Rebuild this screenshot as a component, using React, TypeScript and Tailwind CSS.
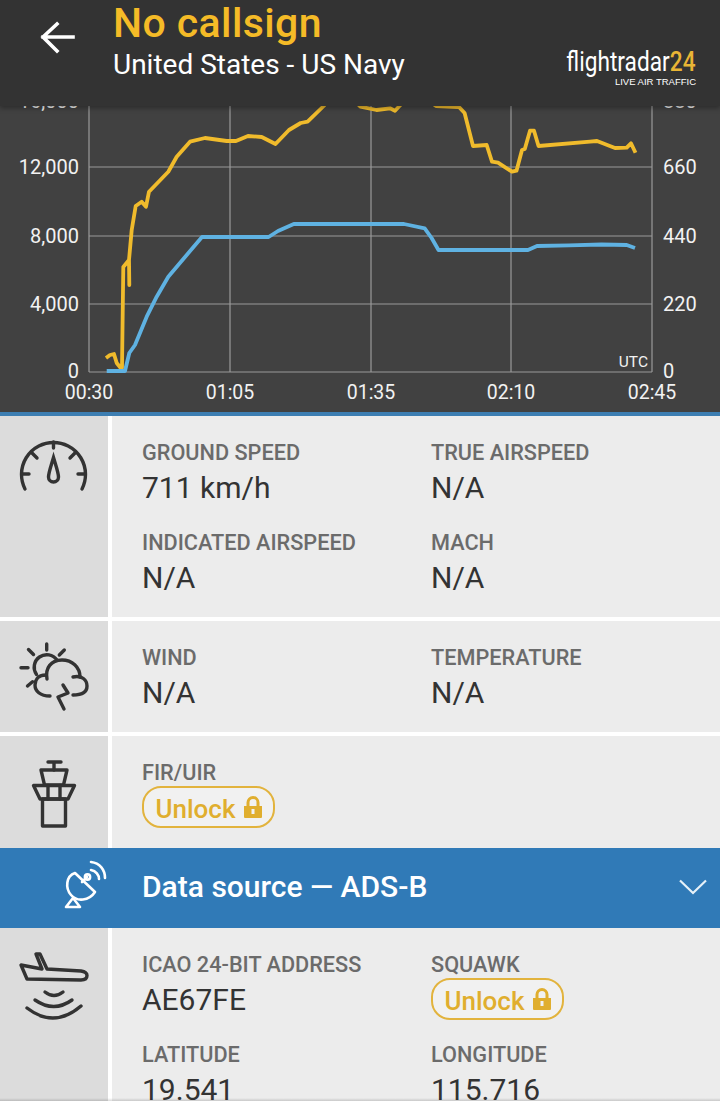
import React from "react";

const altitude =
  "106,358 110,355 114,354 116.7,363 120.7,368 122,368 123.3,267 129,260 129.3,285 129,260 131.7,230 135.7,206 141.7,201.7 146,206.7 149,191.7 168.3,171.7 176.7,156.7 190,141.7 205,138 226.7,141 236,141 248,136 261.7,137 275.5,144 289,130 300.7,123 307.6,121.7 323.7,106 335,92 350,96 360.4,106.7 376.5,110 390,108.3 395,110.7 399.5,106 410,95 425,98 436,106 459,107 464.6,113 473,146 486.7,145 492,161.7 498,162.7 512,171.7 516.5,170.7 522,150 524.8,149 530,130.7 534,130.7 538.5,146 590,141.7 597,141 615,148 626.7,147.7 631,143.3 635.5,152.7";
const speed =
  "106.7,371 125,371 129.3,353 135,345 146.7,316.7 156.7,296.7 168.3,276.7 186.7,255 202,237 268.6,237 278,231 293.8,224 404,224 424.7,228.3 431.6,238 438.5,250 528,250 537,246 569,245.3 601.5,244.5 626.7,245 635,248";

const gridY = [99, 167, 236, 304, 372];
const gridX = [89, 230, 371, 511, 652];
const leftLabels = [
  ["16,000", 108],
  ["12,000", 174],
  ["8,000", 243],
  ["4,000", 311],
  ["0", 378],
] as const;
const rightLabels = [
  ["880", 108],
  ["660", 174],
  ["440", 243],
  ["220", 311],
  ["0", 378],
] as const;
const timeLabels = [
  ["00:30", 89],
  ["01:05", 230],
  ["01:35", 371],
  ["02:10", 511],
  ["02:45", 652],
] as const;

const FlightChart = () => (
  <div className="h-[306px] bg-[#414141]">
    <svg
      width="720"
      height="306"
      viewBox="0 106 720 306"
      className="overflow-visible"
      style={{ fontFamily: "Roboto, sans-serif" }}
    >
      {gridY.map((y) => (
        <line key={y} x1="89" x2="652" y1={y} y2={y} stroke="#9a9a9a" strokeWidth="1.2" />
      ))}
      {gridX.map((x) => (
        <line key={x} x1={x} x2={x} y1="90" y2="372" stroke="#9a9a9a" strokeWidth="1.2" />
      ))}
      <polyline points={altitude} fill="none" stroke="#f0bb2c" strokeWidth="3.8" strokeLinejoin="round" />
      <polyline points={speed} fill="none" stroke="#5fb2e2" strokeWidth="3.8" strokeLinejoin="round" />
      {leftLabels.map(([t, y]) => (
        <text key={t} x="79" y={y} textAnchor="end" fontSize="20" fill="#f2f2f2">
          {t}
        </text>
      ))}
      {rightLabels.map(([t, y]) => (
        <text key={t} x="663" y={y} fontSize="20" fill="#f2f2f2">
          {t}
        </text>
      ))}
      {timeLabels.map(([t, x]) => (
        <text key={t} x={x} y="399" textAnchor="middle" fontSize="19.5" fill="#f2f2f2">
          {t}
        </text>
      ))}
      <text x="648" y="367" textAnchor="end" fontSize="15.5" fill="#f2f2f2">
        UTC
      </text>
    </svg>
  </div>
);

const GaugeIcon = () => (
  <svg width="108" height="100" viewBox="0 0 108 100" fill="none" stroke="#333" strokeWidth="3.4" strokeLinecap="round">
    <path d="M25 73 A32 32 0 1 1 82 73" />
    <path d="M53.5 26v6M22 58h7M78 58h7M32 37l5 5M75 37l-5 5" />
    <path d="M53.5 41.5 C51 50 48.5 57 48.5 61 a5 5 0 0 0 10 0 C58.5 57 56 50 53.5 41.5Z" />
  </svg>
);

const WeatherIcon = () => (
  <svg width="108" height="100" viewBox="0 0 108 100" fill="none" stroke="#333" strokeWidth="3.4" strokeLinecap="round" strokeLinejoin="round">
    <path d="M46.7 23v6M21 46.7h7M28.5 28.5l5 5M64.3 29l-5 5M27.5 65l5-4.3" />
    <path d="M36.5 53.5 A11.5 11.5 0 0 1 57 39" />
    <path d="M47 58 C45 47 51 39 62 39 C72 39 80 46 80 56" />
    <path d="M46 54 C37 54 35 60 35 64 C35 70 40 75 50 75" />
    <path d="M73 56 C82 54 87 59 87 65 C87 71 82 74 73 74" />
    <path d="M63 64 L68 72 L58 76 L64 88" />
  </svg>
);

const TowerIcon = () => (
  <svg width="108" height="100" viewBox="0 0 108 100" fill="none" stroke="#333" strokeWidth="3.4" strokeLinejoin="round" strokeLinecap="round">
    <path d="M48 26h13M54 26v8" />
    <path d="M41 34h26l-3.5 15h-19Z" />
    <path d="M33.5 49.5h41L68 63H40Z" />
    <path d="M48 49.5V63M60 49.5V63" />
    <path d="M42.5 63h23v27h-23Z" />
  </svg>
);

const DishIcon = () => (
  <svg width="108" height="80" viewBox="0 0 108 80" fill="none" stroke="#fff" strokeWidth="2.6" strokeLinecap="round" strokeLinejoin="round">
    <path d="M75 25 C66 28 65 40 71 47 C77 54 89 53 95 44Z" />
    <path d="M82 34 L87 29" />
    <circle cx="87.5" cy="29" r="2.6" />
    <path d="M91 22 C96 23 99 27 99 31" />
    <path d="M91 14 C100 15 105 22 105 30" />
    <path d="M73 50 L66 59 H80Z" />
  </svg>
);

const PlaneIcon = () => (
  <svg width="108" height="110" viewBox="0 0 108 110" fill="none" stroke="#333" strokeWidth="3.4" strokeLinejoin="round" strokeLinecap="round">
    <path d="M21 37 L42 41 L36 26 H40 L47 41 L81 43 Q87 44 87 47.5 Q87 52 81 52 L27 51 Z" />
    <path d="M45 64 Q54 71 63 64" />
    <path d="M35 72 Q54 85 72 72" />
    <path d="M27 80 Q54 101 81 78" />
  </svg>
);

const UnlockPill = () => (
  <div className="flex h-[42px] w-[133px] items-center justify-center gap-[8px] rounded-[19px] border-2 border-[#e2b33d] bg-[#f1f1f1] text-[26px] font-medium text-[#e0ae2e]">
    <span className="mt-1">Unlock</span>
    <svg width="18" height="22" viewBox="0 0 18 22" fill="#e0ae2e">
      <path fillRule="evenodd" d="M0 10h18v11a1 1 0 0 1-1 1H1a1 1 0 0 1-1-1ZM7.5 13v5h3v-5Z" />
      <path d="M2.5 10V6.5a6.5 6.5 0 0 1 13 0V10h-3V6.5a3.5 3.5 0 0 0-7 0V10Z" />
    </svg>
  </div>
);

type FieldProps = { label: string; value?: string; locked?: boolean };

const Field = ({ label, value, locked }: FieldProps) => (
  <div>
    <div className="h-[28px] text-[21.7px] leading-[30px] font-medium whitespace-nowrap text-[#6b6b6b]">{label}</div>
    {locked ? (
      <UnlockPill />
    ) : (
      <div className="h-[44px] text-[30px] leading-[44px] text-[#333]">{value}</div>
    )}
  </div>
);

type RowProps = { icon: React.ReactNode; fields: FieldProps[]; className: string };

const Row = ({ icon, fields, className }: RowProps) => (
  <div className={`flex ${className}`}>
    <div className="w-[108px] shrink-0 bg-[#dcdcdc]">{icon}</div>
    <div className="ml-1 grid flex-1 grid-cols-[289px_1fr] content-start gap-y-[18px] bg-[#ececec] pt-[22px] pl-[30px]">
      {fields.map((f) => (
        <Field key={f.label} {...f} />
      ))}
    </div>
  </div>
);

export default function App() {
  return (
    <div
      className="relative h-[1101px] w-[720px] overflow-hidden bg-white"
      style={{ fontFamily: "Roboto, sans-serif" }}
    >
      <header className="relative z-10 flex h-[106px] bg-[#333333] shadow-[0_2px_5px_rgba(0,0,0,0.35)]">
        <div className="flex w-[113px] shrink-0 justify-start pt-[21px] pl-[40px]">
          <svg width="36" height="34" viewBox="0 0 36 34" fill="none" stroke="#fff" strokeWidth="3.6" strokeLinecap="square">
            <path d="M3 16h30M17 3 3 16l14 14" />
          </svg>
        </div>
        <div className="flex-1">
          <div className="h-[46px] text-[41px] leading-[46px] font-medium tracking-[0.4px] text-[#f5bb27]">No callsign</div>
          <div className="mt-[1px] text-[28px] leading-[36px] text-white">United States - US Navy</div>
        </div>
        <div className="flex w-[170px] flex-col items-end pt-[48px] pr-[24px]">
          <div className="h-[29px] origin-right scale-x-[0.81] text-[28px] leading-[28px] font-normal whitespace-nowrap text-white">
            flightradar<span className="font-medium text-[#e9b535]">24</span>
          </div>
          <div className="text-[9.5px] leading-[10px] whitespace-nowrap text-white" style={{ fontFamily: '"Liberation Sans", sans-serif' }}>
            LIVE AIR TRAFFIC
          </div>
        </div>
      </header>

      <FlightChart />
      <div className="h-1 bg-[#3d7eb2]" />

      <Row
        className="h-[201px]"
        icon={<GaugeIcon />}
        fields={[
          { label: "GROUND SPEED", value: "711 km/h" },
          { label: "TRUE AIRSPEED", value: "N/A" },
          { label: "INDICATED AIRSPEED", value: "N/A" },
          { label: "MACH", value: "N/A" },
        ]}
      />
      <Row
        className="mt-1 h-[111px]"
        icon={<WeatherIcon />}
        fields={[
          { label: "WIND", value: "N/A" },
          { label: "TEMPERATURE", value: "N/A" },
        ]}
      />
      <Row className="mt-1 h-[112px]" icon={<TowerIcon />} fields={[{ label: "FIR/UIR", locked: true }]} />

      <div className="flex h-[80px] items-center bg-[#307ab7] text-white">
        <div className="w-[142px] shrink-0 self-start">
          <DishIcon />
        </div>
        <div className="mb-1 flex-1 text-[30px] font-medium">Data source — ADS-B</div>
        <svg className="mr-[13px] mb-[2px]" width="28" height="16" viewBox="0 0 28 16" fill="none" stroke="#e6f1f8" strokeWidth="2.2">
          <path d="M1 1.5 14 14 27 1.5" />
        </svg>
      </div>

      <Row
        className="h-[173px]"
        icon={<PlaneIcon />}
        fields={[
          { label: "ICAO 24-BIT ADDRESS", value: "AE67FE" },
          { label: "SQUAWK", locked: true },
          { label: "LATITUDE", value: "19.541" },
          { label: "LONGITUDE", value: "115.716" },
        ]}
      />
      {/* faint shadow of the nav bar along the bottom edge */}
      <div className="absolute inset-x-0 bottom-0 h-[3px] bg-linear-to-b from-transparent to-black/15" />
    </div>
  );
}
